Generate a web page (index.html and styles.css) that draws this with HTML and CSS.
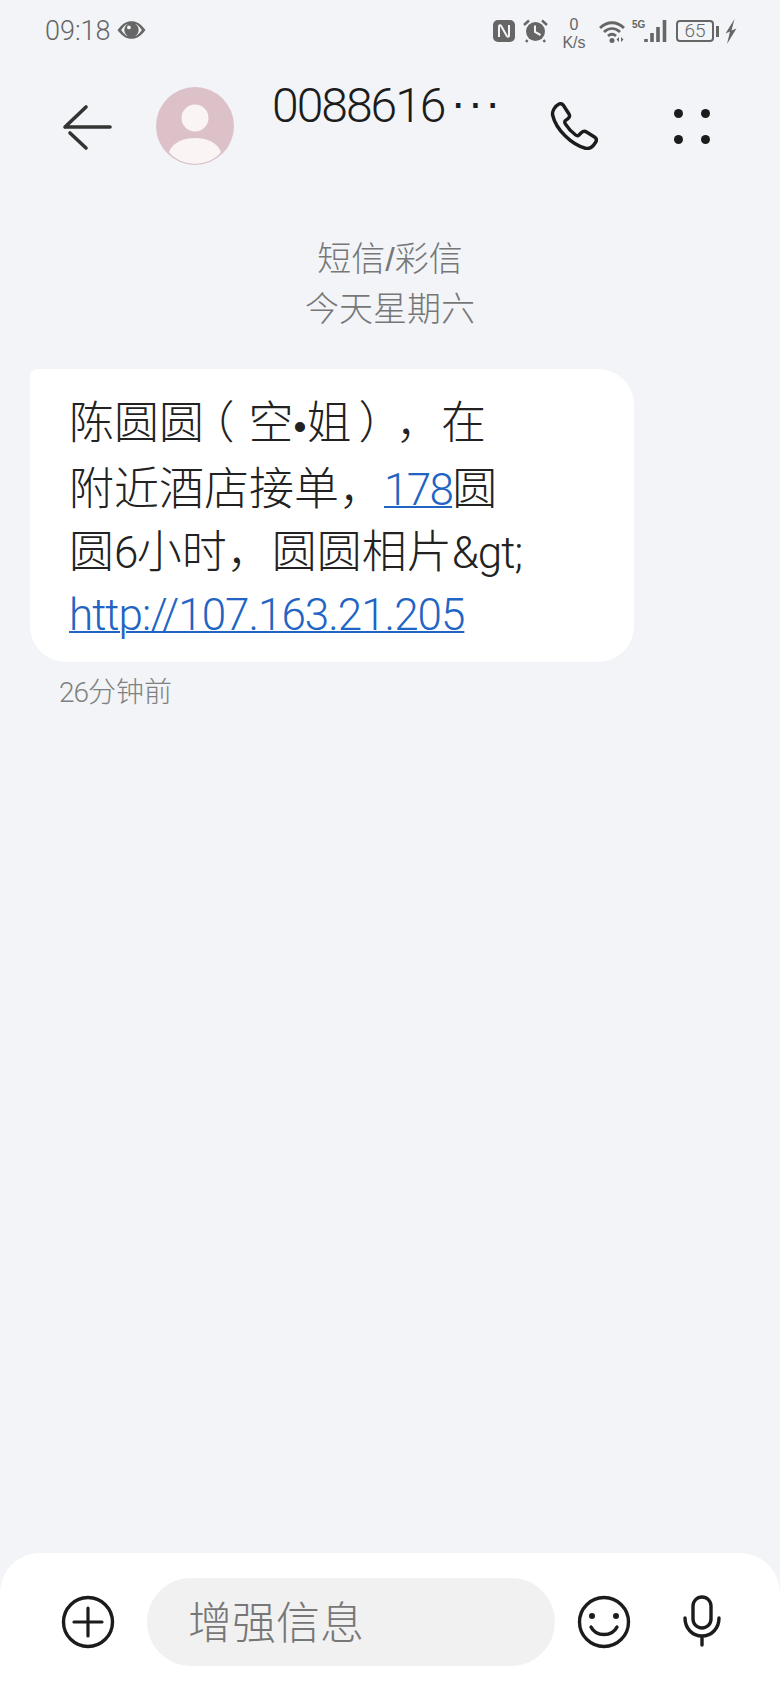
FILE: index.html
```html
<!DOCTYPE html>
<html lang="zh-CN">
<head>
    <meta charset="UTF-8">
    <meta name="viewport" content="width=device-width, initial-scale=1.0">
    <title>短信</title>
    <link rel="stylesheet" href="styles.css">
</head>
<body>
    <!-- status bar -->
    <div class="status-bar">
        <div class="status-left">
            <span class="clock">09:18</span>
            <svg class="eye" width="29" height="20" viewBox="0 0 28 18">
                <path d="M.5 9C5 3 9 .5 14 .5S23 3 27.500 9C23 15 19 17.500 14 17.500S5 15 .5 9Z" fill="#666"/>
                <path d="M4 9C7 5 9 3.400 10.500 3A7 7 0 0 0 10.500 15C9 14.600 7 13 4 9Z" fill="#f2f4f7"/>
                <path d="M24 9C21 5 19 3.400 17.500 3A7 7 0 0 1 17.500 15C19 14.600 21 13 24 9Z" fill="#f2f4f7"/>
                <circle cx="11.500" cy="6.500" r="1.800" fill="#f2f4f7"/>
            </svg>
        </div>
        <div class="status-right">
            <svg width="22" height="22" viewBox="0 0 22 22">
                <rect width="22" height="22" rx="5" fill="#666"/>
                <path d="M6 17V6.500C6 5 7.500 5 8.200 6L13.800 16C14.500 17 16 17 16 15.500V5" fill="none" stroke="#f2f4f7" stroke-width="2"/>
            </svg>
            <svg class="alarm" width="25" height="24" viewBox="0 0 25 24">
                <circle cx="12.500" cy="12.500" r="9.500" fill="#666"/>
                <path d="M12 6.500V13L17.500 16" fill="none" stroke="#f2f4f7" stroke-width="2"/>
                <path d="M1 6L6 1.500M24 6L19 1.500M4.500 21L3 23M20.500 21L22 23" stroke="#666" stroke-width="2.400" fill="none"/>
            </svg>
            <div class="speed"><span>0</span><span>K/s</span></div>
            <svg class="wifi" width="27" height="23" viewBox="0 0 27 23">
                <path d="M1 8C8 1 18 1 25 8M5 12C10 7.500 16 7.500 21 12M9 16C11.500 13.800 14.500 13.800 17 16" fill="none" stroke="#666" stroke-width="2.800"/>
                <circle cx="13" cy="20.500" r="2.500" fill="#666"/>
                <path d="M20 17V22L17.500 19.500ZM22 17V22L24.500 19.500Z" fill="#666"/>
            </svg>
            <div class="signal">
                <span class="net">5G</span>
                <svg width="23" height="22" viewBox="0 0 23 22">
                    <path d="M2 22V19M8 22V13M14 22V7M20.500 22V0" stroke="#666" stroke-width="3.600" fill="none"/>
                </svg>
            </div>
            <div class="battery"><span class="battery-level">65</span></div>
            <span class="battery-cap"></span>
            <svg class="bolt" width="12" height="25" viewBox="0 0 12 25">
                <path d="M9.500 0L.5 14.500L5 12.500L2 25L11.500 9.500L6.500 11.500Z" fill="#666"/>
            </svg>
        </div>
    </div>

    <!-- contact header -->
    <div class="header">
        <svg class="back" width="56" height="56" viewBox="0 0 56 56">
            <path d="M5 29H50M5 29L26 9M10 35L26 50" fill="none" stroke="#333" stroke-width="3.600" stroke-linecap="round"/>
        </svg>
        <svg class="avatar" width="78" height="78" viewBox="0 0 78 78">
            <defs><clipPath id="avatar-clip"><circle cx="39" cy="39" r="38"/></clipPath></defs>
            <circle cx="39" cy="39" r="39" fill="#dcc1c9"/>
            <circle cx="39" cy="31" r="13.500" fill="#faf4f5"/>
            <path d="M13 65C17 55 28 51 39 51S61 55 65 65C60 72 50 77 39 77S18 72 13 65Z" fill="#faf4f5" clip-path="url(#avatar-clip)"/>
        </svg>
        <div class="contact-name">0088616<span class="name-more">···</span></div>
        <svg class="call" width="48" height="48" viewBox="0 0 48 48">
            <path d="M9 2C11 1.200 12.500 2 13.500 3.500L19 12C20 13.800 19.500 15.500 18 16.600L15.500 18.500C14.500 19.500 14.500 20.500 15.300 21.800C18 26 21.500 30 25.600 33C27 34 28 34 29 33L31.500 30.600C33 29.200 35 29 36.500 30L44.500 35C46.500 36.300 46.800 38.500 45.500 40.500C43 44.500 39.500 47 36 46.500C22 43 6 28 2.600 13C2 9 5 4 9 2Z" fill="none" stroke="#1c1c1c" stroke-width="3.400" stroke-linejoin="round"/>
        </svg>
        <div class="menu">
            <span></span><span></span><span></span><span></span>
        </div>
    </div>

    <!-- messages -->
    <div class="thread">
        <div class="thread-info">
            <div>短信/彩信</div>
            <div>今天星期六</div>
        </div>
        <div class="bubble">
            陈圆圆<span class="paren-open">（</span>空<span class="dot">•</span>姐<span class="paren-close">）</span>，在<br>
            附近酒店接单，<a class="link latin" href="#">178</a>圆<br>
            圆<span class="latin">6</span>小时，圆圆相片<span class="latin entity">&amp;gt;</span><br>
            <a class="link latin url" href="#">http://107.163.21.205</a>
        </div>
        <div class="msg-time"><span class="msg-num">26</span>分钟前</div>
    </div>

    <!-- composer -->
    <div class="composer">
        <svg width="56" height="56" viewBox="0 0 56 56">
            <circle cx="28" cy="28" r="24.500" fill="none" stroke="#1c1c1c" stroke-width="3.400"/>
            <path d="M14 28H42M28 14V42" stroke="#1c1c1c" stroke-width="3.200" stroke-linecap="round"/>
        </svg>
        <div class="composer-input">增强信息</div>
        <svg class="smile" width="56" height="56" viewBox="0 0 56 56">
            <circle cx="28" cy="28" r="24.500" fill="none" stroke="#1c1c1c" stroke-width="3.400"/>
            <circle cx="16" cy="22" r="3" fill="#1c1c1c"/>
            <circle cx="40" cy="22" r="3" fill="#1c1c1c"/>
            <path d="M15 33C20 43 36 43 41 33" fill="none" stroke="#1c1c1c" stroke-width="3.400" stroke-linecap="round"/>
        </svg>
        <svg class="mic" width="56" height="56" viewBox="0 0 56 56">
            <rect x="19" y="3" width="18" height="31" rx="9" fill="none" stroke="#1c1c1c" stroke-width="3.400"/>
            <path d="M11 24C11 34 18 42 28 42S45 34 45 24M28 42V51" fill="none" stroke="#1c1c1c" stroke-width="3.400" stroke-linecap="round"/>
        </svg>
    </div>
</body>
</html>
```

FILE: styles.css
```css
body {
    margin: 0;
    width: 780px;
    height: 1690px;
    display: flex;
    flex-direction: column;
    overflow: hidden;
    background-color: #f2f4f7;
    font-family: "Liberation Sans", "Noto Sans CJK SC", sans-serif;
    color: #222;
}

.status-bar {
    height: 62px;
    padding: 0 43px 0 45px;
    display: flex;
    align-items: center;
    justify-content: space-between;
    color: #666;
}
.status-left {
    display: flex;
    align-items: center;
    gap: 6px;
}
.clock {
    font-family: Roboto, "Liberation Sans", sans-serif;
    font-size: 27px;
    font-weight: 300;
}
.eye {
    margin-top: -3px;
}
.status-right {
    display: flex;
    align-items: center;
}
.alarm {
    margin-left: 8px;
}
.speed {
    width: 26px;
    margin-left: 13px;
    display: flex;
    flex-direction: column;
    align-items: center;
    font-size: 16px;
    line-height: 18px;
    padding-top: 6px;
}
.wifi {
    margin-left: 12px;
}
.signal {
    margin-left: 6px;
    display: flex;
    align-items: flex-end;
}
.net {
    font-size: 10px;
    font-weight: 700;
    line-height: 10px;
    align-self: flex-start;
    width: 12px;
}
.battery {
    width: 38px;
    height: 22px;
    margin-left: 9px;
    box-sizing: border-box;
    border: 2px solid #666;
    border-radius: 4px;
    display: flex;
    align-items: center;
    justify-content: center;
}
.battery-level {
    font-family: Roboto, "Liberation Sans", sans-serif;
    font-size: 19px;
    line-height: 18px;
    font-weight: 300;
}
.battery-cap {
    width: 3px;
    height: 11px;
    margin-left: 2px;
    background-color: #666;
}
.bolt {
    margin-left: 6px;
}

.header {
    height: 128px;
    padding: 0 70px 0 60px;
    display: flex;
    align-items: center;
}
.avatar {
    margin-left: 40px;
}
.contact-name {
    flex: 1;
    margin: 0 0 44px 38px;
    font-family: Roboto, "Liberation Sans", sans-serif;
    font-size: 48px;
    font-weight: 300;
    letter-spacing: -2px;
    color: #1c1c1c;
    white-space: nowrap;
}
.name-more {
    margin-left: 6px;
    font-family: "Liberation Sans", sans-serif;
    font-size: 46px;
    font-weight: 400;
    letter-spacing: 2px;
    vertical-align: 4px;
}
.menu {
    width: 36px;
    margin-left: 76px;
    display: grid;
    grid-template-columns: 9px 9px;
    justify-content: space-between;
    row-gap: 17px;
}
.menu span {
    width: 9px;
    height: 9px;
    border-radius: 50%;
    background-color: #1c1c1c;
}

.thread {
    flex: 1;
    padding: 44px 146px 0 30px;
}
.thread-info {
    font-size: 34px;
    line-height: 50px;
    font-weight: 300;
    color: #777;
    text-align: center;
    margin-right: -116px;
}
.bubble {
    margin-top: 35px;
    padding: 24px 20px 15px 39px;
    background-color: #fff;
    border-radius: 8px 36px 36px 36px;
    font-size: 45px;
    line-height: 62.8px;
    font-weight: 300;
    white-space: nowrap;
    text-spacing-trim: space-all;
}
/* parens are set half width, then padded back to a full cell */
.paren-open {
    font-feature-settings: "halt";
    margin: 0 14px 0 8px;
}
.paren-close {
    font-feature-settings: "halt";
    margin: 0 15px 0 7px;
}
.dot {
    font-size: 37px;
}
.latin {
    font-family: Roboto, "Liberation Sans", sans-serif;
    font-size: 44px;
    font-weight: 300;
    letter-spacing: -1.7px;
}
.entity,
.url {
    letter-spacing: -1px;
}
.link {
    color: #2264c4;
    text-decoration: underline;
    text-decoration-thickness: 2px;
}
.msg-time {
    margin-top: 11px;
    padding-left: 29px;
    font-size: 28px;
    line-height: 40px;
    font-weight: 300;
    color: #808080;
}
.msg-num {
    font-family: Roboto, "Liberation Sans", sans-serif;
    letter-spacing: -1px;
}

.composer {
    height: 137px;
    padding: 0 50px 0 60px;
    box-sizing: border-box;
    display: flex;
    align-items: center;
    background-color: #fff;
    border-radius: 40px 40px 0 0;
}
.composer-input {
    flex: 1;
    height: 88px;
    margin-left: 31px;
    padding-left: 41px;
    border-radius: 44px;
    background-color: #f1f1f1;
    font-size: 44px;
    line-height: 92px;
    font-weight: 300;
    color: #777;
}
.smile {
    margin-left: 21px;
}
.mic {
    margin-left: 42px;
}
```
